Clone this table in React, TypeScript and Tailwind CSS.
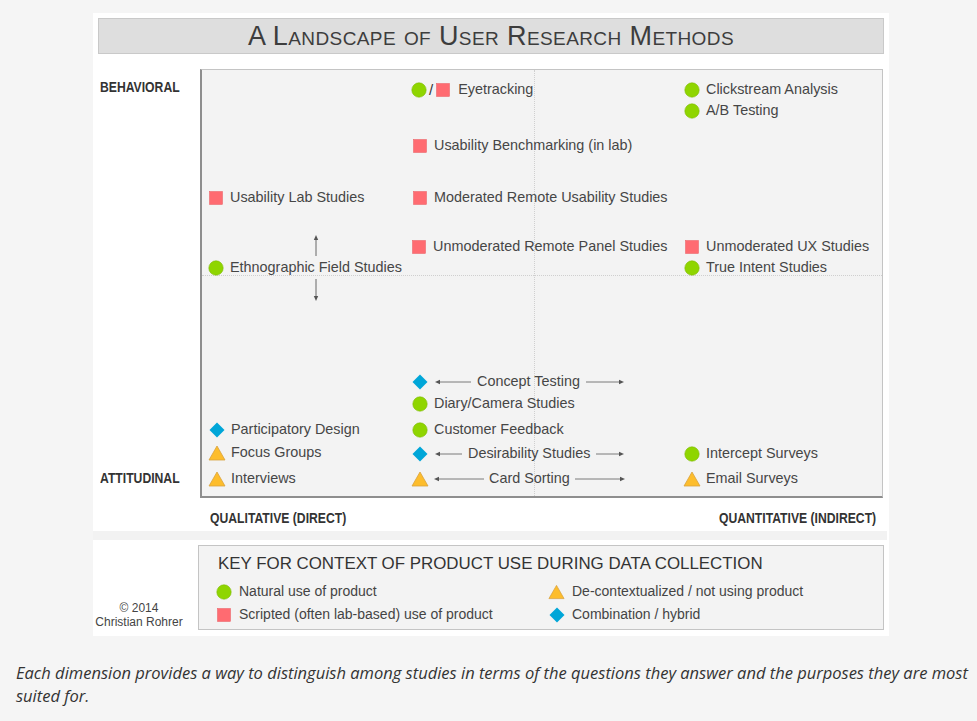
import React from "react";

type Shape = "circle" | "square" | "diamond" | "triangle";

type Method = {
  label: string;
  shape: Shape;
  x: number; // text start, page px
  y: number; // row centre, page px
};

type ArrowMethod = {
  label: string;
  shape: Shape;
  x: number; // icon left
  y: number;
  left: number; // left arrow width
  right: number; // right arrow width
  gap: number;
};

// chart box inner origin (page coords)
const OX = 202;
const OY = 69;

const methods: Method[] = [
  { label: "Clickstream Analysis", shape: "circle", x: 706, y: 89 },
  { label: "A/B Testing", shape: "circle", x: 706, y: 110 },
  { label: "Usability Benchmarking (in lab)", shape: "square", x: 434, y: 145 },
  { label: "Usability Lab Studies", shape: "square", x: 230, y: 197 },
  { label: "Moderated Remote Usability Studies", shape: "square", x: 434, y: 197 },
  { label: "Unmoderated Remote Panel Studies", shape: "square", x: 433, y: 246 },
  { label: "Unmoderated UX Studies", shape: "square", x: 706, y: 246 },
  { label: "Ethnographic Field Studies", shape: "circle", x: 230, y: 267 },
  { label: "True Intent Studies", shape: "circle", x: 706, y: 267 },
  { label: "Diary/Camera Studies", shape: "circle", x: 434, y: 403 },
  { label: "Participatory Design", shape: "diamond", x: 231, y: 429 },
  { label: "Customer Feedback", shape: "circle", x: 434, y: 429 },
  { label: "Focus Groups", shape: "triangle", x: 231, y: 452 },
  { label: "Intercept Surveys", shape: "circle", x: 706, y: 453 },
  { label: "Interviews", shape: "triangle", x: 231, y: 478 },
  { label: "Email Surveys", shape: "triangle", x: 706, y: 478 },
];

const spanned: ArrowMethod[] = [
  { label: "Concept Testing", shape: "diamond", x: 411, y: 381, left: 36, right: 38, gap: 6 },
  { label: "Desirability Studies", shape: "diamond", x: 411, y: 453, left: 27, right: 28, gap: 6 },
  { label: "Card Sorting", shape: "triangle", x: 411, y: 478, left: 50, right: 50, gap: 5 },
];

function Icon({ shape }: { shape: Shape }) {
  if (shape === "circle")
    return (
      <svg width="16" height="16" viewBox="0 0 16 16">
        <circle cx="8" cy="8" r="7.2" fill="#8fd500" stroke="#7dbb00" strokeWidth="0.6" />
      </svg>
    );
  if (shape === "square")
    return (
      <svg width="16" height="16" viewBox="0 0 16 16">
        <rect x="1.5" y="1.5" width="13" height="13" fill="#ff6b71" stroke="#ea5a60" strokeWidth="0.5" />
      </svg>
    );
  if (shape === "diamond")
    return (
      <svg width="16" height="16" viewBox="0 0 16 16">
        <polygon points="8,0.5 15.5,8 8,15.5 0.5,8" fill="#00a6d8" />
      </svg>
    );
  return (
    <svg width="18" height="16" viewBox="0 0 18 16">
      <polygon points="9,1 17,15 1,15" fill="#fdbd2c" stroke="#d8a23e" strokeWidth="0.8" />
    </svg>
  );
}

function HArrow({ width, dir }: { width: number; dir: "left" | "right" }) {
  return (
    <svg width={width} height="8" viewBox={`0 0 ${width} 8`} className="shrink-0">
      {dir === "left" ? (
        <>
          <line x1="3" y1="4" x2={width} y2="4" stroke="#7a7a7a" strokeWidth="1" />
          <polygon points="0,4 5,1.8 5,6.2" fill="#555" />
        </>
      ) : (
        <>
          <line x1="0" y1="4" x2={width - 3} y2="4" stroke="#7a7a7a" strokeWidth="1" />
          <polygon points={`${width},4 ${width - 5},1.8 ${width - 5},6.2`} fill="#555" />
        </>
      )}
    </svg>
  );
}

function VArrow({ dir }: { dir: "up" | "down" }) {
  return (
    <svg width="8" height="22" viewBox="0 0 8 22">
      {dir === "up" ? (
        <>
          <line x1="4" y1="3" x2="4" y2="21" stroke="#666" strokeWidth="1" />
          <polygon points="4,0 1.8,5 6.2,5" fill="#555" />
        </>
      ) : (
        <>
          <line x1="4" y1="0" x2="4" y2="19" stroke="#666" strokeWidth="1" />
          <polygon points="4,22 1.8,17 6.2,17" fill="#555" />
        </>
      )}
    </svg>
  );
}

function Chart() {
  return (
    <div className="relative w-[683px] h-[429px] shrink-0 bg-[#f3f3f3] border border-[#c4c4c4] border-l-2 border-b-2 border-l-[#8e8e8e] border-b-[#8e8e8e]">
      {/* quadrant guides */}
      <div className="absolute top-0 bottom-0 left-[332px] border-l border-dotted border-[#cfcfcf]" />
      <div className="absolute left-0 right-0 top-[205px] border-t border-dotted border-[#cfcfcf]" />

      {/* eyetracking: natural / scripted */}
      <div
        className="absolute flex items-center h-[20px] text-[14.4px] text-[#464646]"
        style={{ left: 411 - OX, top: 89 - OY - 10 }}
      >
        <Icon shape="circle" />
        <span className="mx-[2px] text-[15px] text-[#333]">/</span>
        <Icon shape="square" />
        <span className="ml-[7px]">Eyetracking</span>
      </div>

      {methods.map((m) => (
        <div
          key={m.label}
          className="absolute flex items-center gap-[5px] h-[20px] text-[14.4px] text-[#464646] whitespace-nowrap"
          style={{ left: m.x - OX - 23, top: m.y - OY - 10 }}
        >
          <span className="flex w-[18px] justify-center">
            <Icon shape={m.shape} />
          </span>
          <span>{m.label}</span>
        </div>
      ))}

      {spanned.map((m) => (
        <div
          key={m.label}
          className="absolute flex items-center h-[20px] text-[14.4px] text-[#464646] whitespace-nowrap"
          style={{ left: m.x - OX, top: m.y - OY - 10, gap: m.gap }}
        >
          <span className="flex w-[18px] justify-center">
            <Icon shape={m.shape} />
          </span>
          <HArrow width={m.left} dir="left" />
          <span>{m.label}</span>
          <HArrow width={m.right} dir="right" />
        </div>
      ))}

      {/* ethnographic field studies span both halves */}
      <div className="absolute left-[110px] top-[165px]">
        <VArrow dir="up" />
      </div>
      <div className="absolute left-[110px] top-[209px]">
        <VArrow dir="down" />
      </div>
    </div>
  );
}

function KeyItem({ shape, label }: { shape: Shape; label: string }) {
  return (
    <div className="flex items-center gap-[7px] h-[23px]">
      <span className="flex w-[17px] justify-center">
        <Icon shape={shape} />
      </span>
      <span>{label}</span>
    </div>
  );
}

export default function App() {
  return (
    <div
      className="min-h-[721px] w-[977px] bg-[#f5f5f5] pt-[13px] pb-6"
      style={{ fontFamily: '"Liberation Sans", Arial, sans-serif' }}
    >
      <div className="ml-[93px] w-[796px] bg-white">
        <div className="px-[5px] pt-[5px]">
          <div className="flex h-[36px] items-center justify-center bg-[#dedede] border border-[#c9c9c9]">
            <h1 className="text-[27px] leading-none text-[#3d3d3d] [font-variant:small-caps] tracking-[0.4px]">
              A Landscape of User Research Methods
            </h1>
          </div>
        </div>

        <div className="flex pt-[15px]">
          <div className="flex w-[107px] flex-col items-start justify-between pl-[7px] pt-[8px] pb-[10px] font-bold text-[14.5px] leading-[20px] text-[#333]">
            <span className="inline-block origin-left scale-x-[0.84]">BEHAVIORAL</span>
            <span className="inline-block origin-left scale-x-[0.84]">ATTITUDINAL</span>
          </div>
          <Chart />
        </div>

        <div className="flex h-[33px] items-start justify-between pt-[10px] pl-[117px] pr-[13px] font-bold text-[14.5px] leading-[20px] text-[#333]">
          <span className="inline-block origin-left scale-x-[0.84]">QUALITATIVE (DIRECT)</span>
          <span className="inline-block origin-right scale-x-[0.84]">QUANTITATIVE (INDIRECT)</span>
        </div>

        <div className="h-[9px] bg-[#f2f2f2] mr-[2px]" />

        <div className="flex pt-[5px] pb-[6px]">
          <div className="flex w-[105px] flex-col items-center justify-end pr-[13px] pb-[1px] text-[12px] leading-[14px] text-[#444]">
            <span>© 2014</span>
            <span className="whitespace-nowrap">Christian Rohrer</span>
          </div>
          <div className="w-[686px] h-[85px] bg-[#f3f3f3] border border-[#c4c4c4] pl-[16px] pt-[7px]">
            <div className="pl-[3px] text-[16.9px] leading-[22px] text-[#333]">
              KEY FOR CONTEXT OF PRODUCT USE DURING DATA COLLECTION
            </div>
            <div className="mt-[5px] grid grid-cols-[333px_1fr] text-[14px] text-[#444]">
              <KeyItem shape="circle" label="Natural use of product" />
              <KeyItem shape="triangle" label="De-contextualized / not using product" />
              <KeyItem shape="square" label="Scripted (often lab-based) use of product" />
              <KeyItem shape="diamond" label="Combination / hybrid" />
            </div>
          </div>
        </div>
      </div>

      <p className="mt-[25px] pl-[16px] pr-[4px] text-[16.5px] leading-[23px] italic text-[#333] [font-family:'Open_Sans',Lato,sans-serif]">
        Each dimension provides a way to distinguish among studies in terms of the questions they answer and the purposes they are most suited for.
      </p>
    </div>
  );
}
